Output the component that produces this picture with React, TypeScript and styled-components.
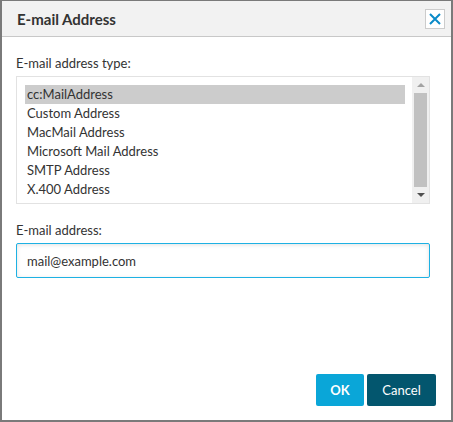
import React from "react";
import styled, { createGlobalStyle } from "styled-components";

const Global = createGlobalStyle`
  html, body { margin: 0; padding: 0; background: #ffffff; }
  body { font-family: "Lato", "Noto Sans", sans-serif; color: #333333; }
  * { box-sizing: border-box; }
`;

const Dialog = styled.div`
  width: 453px;
  height: 422px;
  display: flex;
  flex-direction: column;
  background: #ffffff;
  border-style: solid;
  border-color: #7a7a7a;
  border-width: 1px 2px 2px 2px;
`;

const Header = styled.div`
  height: 36px;
  flex: none;
  display: flex;
  align-items: center;
  justify-content: space-between;
  padding: 0 6px 0 15px;
  background: #f2f2f2;
  border-bottom: 1px solid #c8c8c8;
`;

const Title = styled.h1`
  margin: 0;
  font-size: 15px;
  font-weight: 700;
  color: #333333;
`;

const CloseButton = styled.button`
  width: 20px;
  height: 20px;
  padding: 0;
  display: flex;
  align-items: center;
  justify-content: center;
  background: #ffffff;
  border: 1px solid #cccccc;
  cursor: pointer;
`;

const Body = styled.div`
  flex: 1;
  display: flex;
  flex-direction: column;
  padding: 16px 21px 0 14px;
`;

const Label = styled.label`
  display: block;
  font-size: 13px;
  line-height: 20px;
  height: 20px;
  color: #333333;
  margin-bottom: 3px;
`;

const ListBox = styled.div`
  height: 128px;
  display: flex;
  border: 1px solid #e2e2e2;
  margin-bottom: 16px;
`;

const Options = styled.ul`
  flex: 1;
  list-style: none;
  margin: 0;
  padding: 8px 7px 0 8px;
`;

const Option = styled.li<{ $selected?: boolean }>`
  height: 19px;
  line-height: 19px;
  padding-left: 2px;
  font-size: 13px;
  color: #333333;
  background: ${(p) => (p.$selected ? "#cccccc" : "transparent")};
`;

const ScrollBar = styled.div`
  width: 17px;
  display: flex;
  flex-direction: column;
  align-items: center;
  background: #f0f0f0;
  padding: 0 1px;
`;

const Arrow = styled.div<{ $down?: boolean }>`
  height: 16px;
  width: 100%;
  display: flex;
  align-items: center;
  justify-content: center;
  &::before {
    content: "";
    width: 0;
    height: 0;
    border-left: 4px solid transparent;
    border-right: 4px solid transparent;
    ${(p) =>
      p.$down
        ? "border-top: 4px solid #505050;"
        : "border-bottom: 4px solid #a3a3a3;"}
  }
`;

const Thumb = styled.div`
  flex: 1;
  width: 13px;
  background: #c1c1c1;
`;

const Input = styled.input`
  height: 35px;
  width: 100%;
  padding: 0 10px;
  font-family: inherit;
  font-size: 13px;
  color: #333333;
  border: 1px solid #1eb1e3;
  border-radius: 2px;
  box-shadow: inset 0 1px 4px rgba(0, 0, 0, 0.12);
  outline: none;
`;

const Footer = styled.div`
  flex: none;
  display: flex;
  justify-content: flex-end;
  gap: 3px;
  padding: 0 15px 14px 0;
`;

const Button = styled.button<{ $primary?: boolean }>`
  height: 32px;
  min-width: ${(p) => (p.$primary ? "48px" : "69px")};
  padding: 0 10px;
  border: none;
  border-radius: 2px;
  font-family: inherit;
  font-size: 13px;
  font-weight: ${(p) => (p.$primary ? 700 : 400)};
  color: #ffffff;
  background: ${(p) => (p.$primary ? "#0aa6d8" : "#03566e")};
  cursor: pointer;
`;

const options = [
  "cc:MailAddress",
  "Custom Address",
  "MacMail Address",
  "Microsoft Mail Address",
  "SMTP Address",
  "X.400 Address",
];

export default function App() {
  return (
    <>
      <Global />
      <Dialog>
        <Header>
          <Title>E-mail Address</Title>
          <CloseButton aria-label="Close">
            <svg width="14" height="14" viewBox="0 0 14 14">
              <path
                d="M2 2 L12 12 M12 2 L2 12"
                stroke="#0a8ac8"
                strokeWidth="2"
                fill="none"
              />
            </svg>
          </CloseButton>
        </Header>
        <Body>
          <Label>E-mail address type:</Label>
          <ListBox>
            <Options>
              {options.map((o, i) => (
                <Option key={o} $selected={i === 0}>
                  {o}
                </Option>
              ))}
            </Options>
            <ScrollBar>
              <Arrow />
              <Thumb />
              <Arrow $down />
            </ScrollBar>
          </ListBox>
          <Label>E-mail address:</Label>
          <Input defaultValue="mail@example.com" />
        </Body>
        <Footer>
          <Button $primary>OK</Button>
          <Button>Cancel</Button>
        </Footer>
      </Dialog>
    </>
  );
}
